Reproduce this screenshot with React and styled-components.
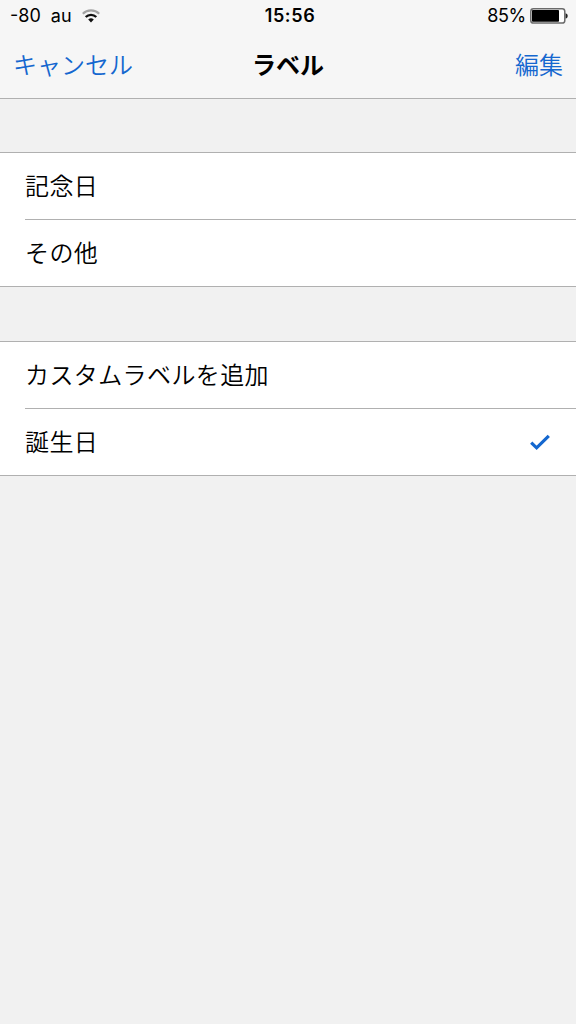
import React from 'react';
import styled, { createGlobalStyle } from 'styled-components';

const sections = [
    [
        { label: '記念日' },
        { label: 'その他' }
    ],
    [
        { label: 'カスタムラベルを追加' },
        { label: '誕生日', checked: true }
    ]
];

const WifiIcon = () => (
    <svg width="18" height="14" viewBox="0 0 18 14" fill="none">
        <path d="M.8 4.8a11.6 11.6 0 0 1 16.4 0" stroke="#a3a3a3" strokeWidth="2.1" />
        <path d="M3.7 8a7.5 7.5 0 0 1 10.6 0" stroke="#111" strokeWidth="2.3" />
        <path d="M9 13.4 6.2 10.6a4 4 0 0 1 5.6 0z" fill="#111" />
    </svg>
);

const BatteryIcon = () => (
    <svg width="38" height="16" viewBox="0 0 38 16">
        <rect x="0.8" y="0.8" width="34" height="14.2" rx="2.6" fill="#fff" stroke="#6b6b6b" strokeWidth="1.5" />
        <rect x="2" y="2" width="27" height="11.8" rx="0.8" fill="#000" />
        <path d="M35.6 5.2c2.8.7 2.8 4.7 0 5.4z" fill="#222" />
    </svg>
);

const CheckIcon = () => (
    <svg width="22" height="18" viewBox="0 0 22 18" fill="none" stroke="#1467cf" strokeWidth="3.2">
        <path d="M2.2 9.6 7.6 14.8 19.8 2.8" />
    </svg>
);

const App = () => (
    <React.Fragment>
        <GlobalStyle />
        <Screen>
            <Header>
                <StatusBar>
                    <Carrier>
                        <span>-80</span>
                        <span>au</span>
                        <WifiIcon />
                    </Carrier>
                    <Clock>15:56</Clock>
                    <Battery>
                        <span>85%</span>
                        <BatteryIcon />
                    </Battery>
                </StatusBar>
                <NavBar>
                    <NavButton>キャンセル</NavButton>
                    <Title>ラベル</Title>
                    <NavButton $end>編集</NavButton>
                </NavBar>
            </Header>
            <List>
                {sections.map((rows, index) => (
                    <Section key={index}>
                        {rows.map(row => (
                            <Row key={row.label}>
                                <span>{row.label}</span>
                                {row.checked && <CheckIcon />}
                            </Row>
                        ))}
                    </Section>
                ))}
            </List>
        </Screen>
    </React.Fragment>
);

export default App;

const GlobalStyle = createGlobalStyle`
  * {
    box-sizing: border-box;
  }

  body {
    margin: 0;
    background: #f1f1f1;
  }
`;

const Screen = styled.div`
  height: 1024px;
  overflow: hidden;
  background: #f1f1f1;
  color: #000;
  font-family: 'Noto Sans CJK JP', sans-serif;
  font-kerning: none;
`;

const Header = styled.header`
  height: 99px;
  background: #f6f6f6;
  border-bottom: 1px solid #b0b0b0;
`;

const StatusBar = styled.div`
  display: grid;
  grid-template-columns: 1fr auto 1fr;
  align-items: center;
  height: 32px;
  padding: 0 8px 0 10px;
  font-family: 'Inter', sans-serif;
  font-size: 18px;
  line-height: 32px;
`;

const Carrier = styled.div`
  display: flex;
  align-items: center;
  gap: 10px;
`;

const Clock = styled.div`
  padding-left: 2px;
  font-weight: 600;
  letter-spacing: 0.6px;
`;

const Battery = styled.div`
  display: flex;
  align-items: center;
  justify-content: flex-end;
  gap: 4px;
  letter-spacing: -0.3px;
`;

const NavBar = styled.nav`
  display: grid;
  grid-template-columns: 1fr auto 1fr;
  align-items: center;
  height: 66px;
  padding: 0 13px 4px;
`;

const NavButton = styled.button`
  justify-self: ${props => (props.$end ? 'end' : 'start')};
  padding: 0;
  border: 0;
  background: none;
  color: #1467cf;
  font: 350 24px 'Noto Sans CJK JP', sans-serif;
  font-kerning: none;
`;

const Title = styled.h1`
  margin: 0;
  font-size: 24px;
  font-weight: 700;
`;

const List = styled.main`
  display: flex;
  flex-direction: column;
  gap: 54px;
  padding-top: 53px;
`;

const Section = styled.section`
  background: #fff;
  border-top: 1px solid #b0b0b0;
  border-bottom: 1px solid #b0b0b0;
`;

const Row = styled.div`
  display: flex;
  align-items: center;
  justify-content: space-between;
  height: 66px;
  margin-left: 25px;
  padding-right: 25px;
  font-size: 24px;
  font-weight: 350;
  letter-spacing: 0.4px;

  span {
    padding-bottom: 4px;
  }

  & + & {
    height: 67px;
    border-top: 1px solid #b0b0b0;
  }
`;
